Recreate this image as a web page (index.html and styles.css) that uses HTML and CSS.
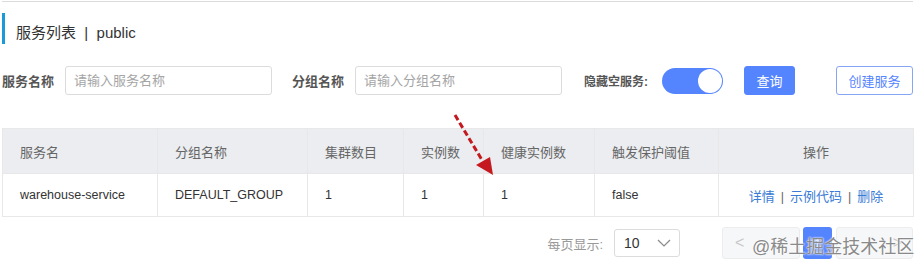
FILE: index.html
```html
<!DOCTYPE html>
<html lang="zh-CN">
<head>
  <meta charset="UTF-8" />
  <meta name="viewport" content="width=device-width, initial-scale=1.0" />
  <title>服务列表</title>
  <link rel="stylesheet" href="styles.css">
</head>
<body>
  <div class="page">
    <div class="title-bar">
      <span class="title">服务列表&nbsp;&nbsp;|&nbsp;&nbsp;public</span>
    </div>

    <!-- search filters -->
    <div class="filters">
      <label class="label">服务名称</label>
      <input class="input" type="text" placeholder="请输入服务名称" />
      <label class="label label-group">分组名称</label>
      <input class="input" type="text" placeholder="请输入分组名称" />
      <label class="label label-hide">隐藏空服务:</label>
      <span class="switch"><span class="knob"></span></span>
      <button class="btn btn-primary">查询</button>
      <button class="btn btn-outline">创建服务</button>
    </div>

    <table class="service-table">
      <colgroup>
        <col style="width:155px" />
        <col style="width:150px" />
        <col style="width:96px" />
        <col style="width:80px" />
        <col style="width:111px" />
        <col style="width:124px" />
        <col style="width:195px" />
      </colgroup>
      <thead>
        <tr>
          <th>服务名</th>
          <th>分组名称</th>
          <th>集群数目</th>
          <th>实例数</th>
          <th>健康实例数</th>
          <th>触发保护阈值</th>
          <th class="center">操作</th>
        </tr>
      </thead>
      <tbody>
        <tr>
          <td>warehouse-service</td>
          <td>DEFAULT_GROUP</td>
          <td>1</td>
          <td>1</td>
          <td>1</td>
          <td>false</td>
          <td class="center actions">
            <a href="#">详情</a><span class="sep">|</span><a href="#">示例代码</a><span class="sep">|</span><a href="#">删除</a>
          </td>
        </tr>
      </tbody>
    </table>

    <div class="pager">
      <span class="pager-label">每页显示:</span>
      <span class="select">10
        <svg width="14" height="10" viewBox="0 0 14 10"><path d="M1 2 L7 8 L13 2" fill="none" stroke="#888" stroke-width="1.2"/></svg>
      </span>
      <span class="page-btn prev">&lt;</span>
      <span class="page-num">1</span>
      <span class="page-btn next">&gt;</span>
    </div>

    <!-- annotation arrow drawn over the table -->
    <svg class="mark-arrow" width="60" height="80" viewBox="0 0 60 80">
      <line x1="13" y1="13" x2="40" y2="58" stroke="#c41a1f" stroke-width="3" stroke-dasharray="6 3"/>
      <polygon points="34,63 48,55 51,73" fill="#c41a1f"/>
    </svg>

    <span class="watermark">@稀土掘金技术社区</span>
  </div>
</body>
</html>
```

FILE: styles.css
```css
* { box-sizing: border-box; }
body {
  margin: 0;
  background: #fff;
  font-family: "Liberation Sans", "Noto Sans CJK SC", sans-serif;
  color: #333;
}

.page {
  position: relative;
  width: 919px;
  height: 263px;
  padding: 0 6px 0 2px;
  overflow: hidden;
  border-top: 1px solid transparent;
}
.page::before {
  content: "";
  display: block;
  height: 1px;
  background: #dcdcdc;
}

/* Title with blue side bar */
.title-bar {
  margin-top: 11px;
  height: 31px;
  border-left: 3px solid #1a9bd7;
  padding-left: 11px;
  display: flex;
  align-items: center;
}
.title {
  font-size: 15px;
  color: #333;
  padding-top: 6px;
}

/* Filters */
.filters {
  display: flex;
  align-items: center;
  margin-top: 22px;
  height: 29px;
}
.filters > * { flex-shrink: 0; }
.label {
  width: 52px;
  font-size: 13px;
  font-weight: bold;
  color: #555;
  white-space: nowrap;
}
.label-group { margin-left: 20px; }
.label-hide {
  width: 66px;
  margin-left: 22px;
  font-size: 12px;
}
.input {
  width: 207px;
  height: 29px;
  margin-left: 11px;
  border: 1px solid #dcdcdc;
  border-radius: 3px;
  padding: 0 8px;
  font-size: 13px;
  font-family: inherit;
}
.input::placeholder { color: #a5a5a5; }

.switch {
  position: relative;
  width: 61px;
  height: 26px;
  margin-left: 12px;
  border-radius: 13px;
  background: #5584ff;
}
.knob {
  position: absolute;
  right: 1px;
  top: 1px;
  width: 24px;
  height: 24px;
  border-radius: 50%;
  background: #fff;
}

.btn {
  height: 29px;
  padding: 0;
  border-radius: 3px;
  font-size: 13px;
  font-family: inherit;
  cursor: pointer;
  white-space: nowrap;
}
.btn-primary {
  width: 51px;
  margin-left: 21px;
  border: 1px solid #5584ff;
  background: #5584ff;
  color: #fff;
}
.btn-outline {
  width: 77px;
  margin-left: 41px;
  border: 1px solid #86a5f5;
  background: #fff;
  color: #5584ff;
}

/* Table */
.service-table {
  margin-top: 33px;
  width: 911px;
  border-collapse: collapse;
  table-layout: fixed;
  font-size: 13px;
}
.service-table th,
.service-table td {
  border: 1px solid #e8e8e8;
  padding: 0 17px;
  text-align: left;
  white-space: nowrap;
}
.service-table th {
  height: 45px;
  background: #ebedf0;
  color: #666;
  font-weight: normal;
}
.service-table td {
  height: 43px;
  color: #333;
  font-size: 12.5px;
}
.service-table .center { text-align: center; }
.actions a {
  color: #3a7bd5;
  text-decoration: none;
  font-size: 13px;
}
.actions .sep {
  color: #666;
  margin: 0 6px;
}

/* Pagination */
.pager {
  display: flex;
  align-items: center;
  justify-content: flex-end;
  margin-top: 10px;
  height: 32px;
  font-size: 13px;
}
.pager-label { color: #999; }
.select {
  display: flex;
  align-items: center;
  justify-content: space-between;
  width: 66px;
  height: 28px;
  margin-left: 11px;
  padding: 0 8px 0 9px;
  border: 1px solid #dcdcdc;
  border-radius: 3px;
  color: #333;
  font-size: 14px;
}
.page-btn {
  display: flex;
  align-items: center;
  height: 32px;
  border: 1px solid #ececec;
  border-radius: 3px;
  background: #f6f7f9;
  color: #c8c8c8;
  font-size: 16px;
}
.prev {
  width: 78px;
  margin-left: 42px;
  padding-left: 12px;
}
.next {
  width: 77px;
  margin-left: 4px;
  justify-content: flex-end;
  padding-right: 10px;
}
.page-num {
  display: flex;
  align-items: center;
  justify-content: center;
  width: 29px;
  height: 32px;
  margin-left: 3px;
  border-radius: 3px;
  background: #5584ff;
  color: #fff;
}

/* Overlays */
.mark-arrow {
  position: absolute;
  left: 442px;
  top: 101px;
}
.watermark {
  position: absolute;
  left: 752px;
  top: 231px;
  font-size: 18px;
  color: #8a8a8a;
  text-shadow: 0 0 2px #fff, 0 0 2px #fff;
}
```
